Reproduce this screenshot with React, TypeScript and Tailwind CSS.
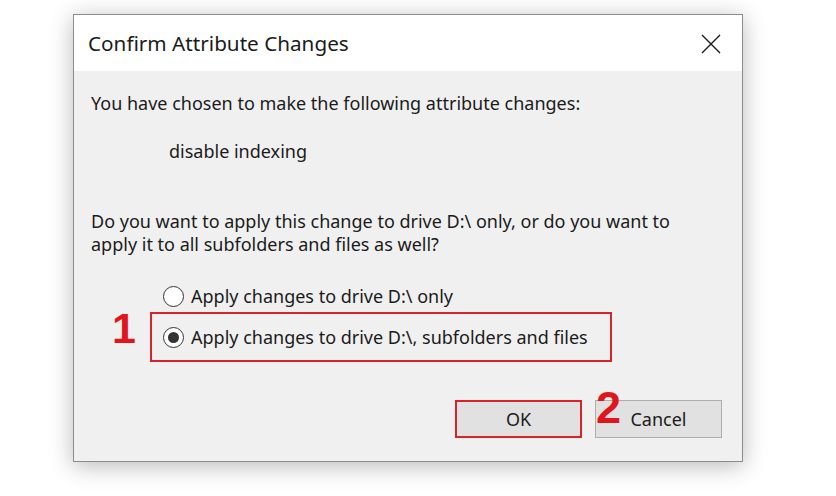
import React from "react";

function Radio({ checked }: { checked?: boolean }) {
  return (
    <span className="relative flex h-[21px] w-[21px] shrink-0 items-center justify-center rounded-full border border-[#333333] bg-white">
      {checked && <span className="h-[11px] w-[11px] rounded-full bg-[#333333]" />}
    </span>
  );
}

export default function App() {
  return (
    <div
      className="relative h-[496px] w-[836px] overflow-hidden bg-white pt-[14px] pl-[73px] text-[#1b1b1b]"
      style={{ fontFamily: '"Noto Sans", "Open Sans", sans-serif' }}
    >
      <div className="flex h-[448px] w-[670px] flex-col border border-[#8c8c8c] bg-[#f0f0f0] shadow-[0_4px_22px_rgba(0,0,0,0.28)]">
        {/* Title bar */}
        <div className="flex h-[56px] shrink-0 items-center justify-between bg-white pl-[14px] pr-[21px]">
          <span className="text-[20.7px] leading-none text-[#1b1b1b]">Confirm Attribute Changes</span>
          <svg width="20" height="20" viewBox="0 0 20 20" className="mt-[1px]">
            <path d="M1 1 L19 19 M19 1 L1 19" stroke="#1b1b1b" strokeWidth="1.4" fill="none" />
          </svg>
        </div>

        {/* Body */}
        <div className="flex flex-1 flex-col pl-[17px] pr-[20px] pt-[21px] text-[18px] leading-[23px]">
          <p>You have chosen to make the following attribute changes:</p>
          <p className="mt-[25px] pl-[78px]">disable indexing</p>
          <p className="mt-[47px]">
            Do you want to apply this change to drive D:\ only, or do you want to
            <br />
            apply it to all subfolders and files as well?
          </p>

          <div className="relative mt-[28px] ml-[59px] flex w-[462px] flex-col">
            <label className="flex h-[24px] items-center gap-[7px] pl-[13px]">
              <Radio />
              <span>Apply changes to drive D:\ only</span>
            </label>
            <div className="mt-[4px] flex h-[50px] items-center gap-[7px] border-2 border-[#d9232a] pl-[11px]">
              <Radio checked />
              <span>Apply changes to drive D:\, subfolders and files</span>
            </div>
            <span
              className="absolute left-[-38px] top-[23px] text-[43px] font-bold leading-none text-[#e0161c]"
              style={{ fontFamily: '"Liberation Sans", Arial, sans-serif' }}
            >
              1
            </span>
          </div>

          <div className="mt-auto mb-[23px] flex justify-end gap-[13px]">
            <button className="h-[38px] w-[127px] border-2 border-[#d9232a] bg-[#e1e1e1] text-[18px] text-[#1b1b1b]">
              OK
            </button>
            <div className="relative">
              <button className="h-[38px] w-[127px] border border-[#adadad] bg-[#e1e1e1] text-[18px] text-[#1b1b1b]">
                Cancel
              </button>
              <span
                className="absolute left-[1px] top-[-15px] text-[45px] font-bold leading-none text-[#e0161c]"
                style={{ fontFamily: '"Liberation Sans", Arial, sans-serif' }}
              >
                2
              </span>
            </div>
          </div>
        </div>
      </div>
    </div>
  );
}
